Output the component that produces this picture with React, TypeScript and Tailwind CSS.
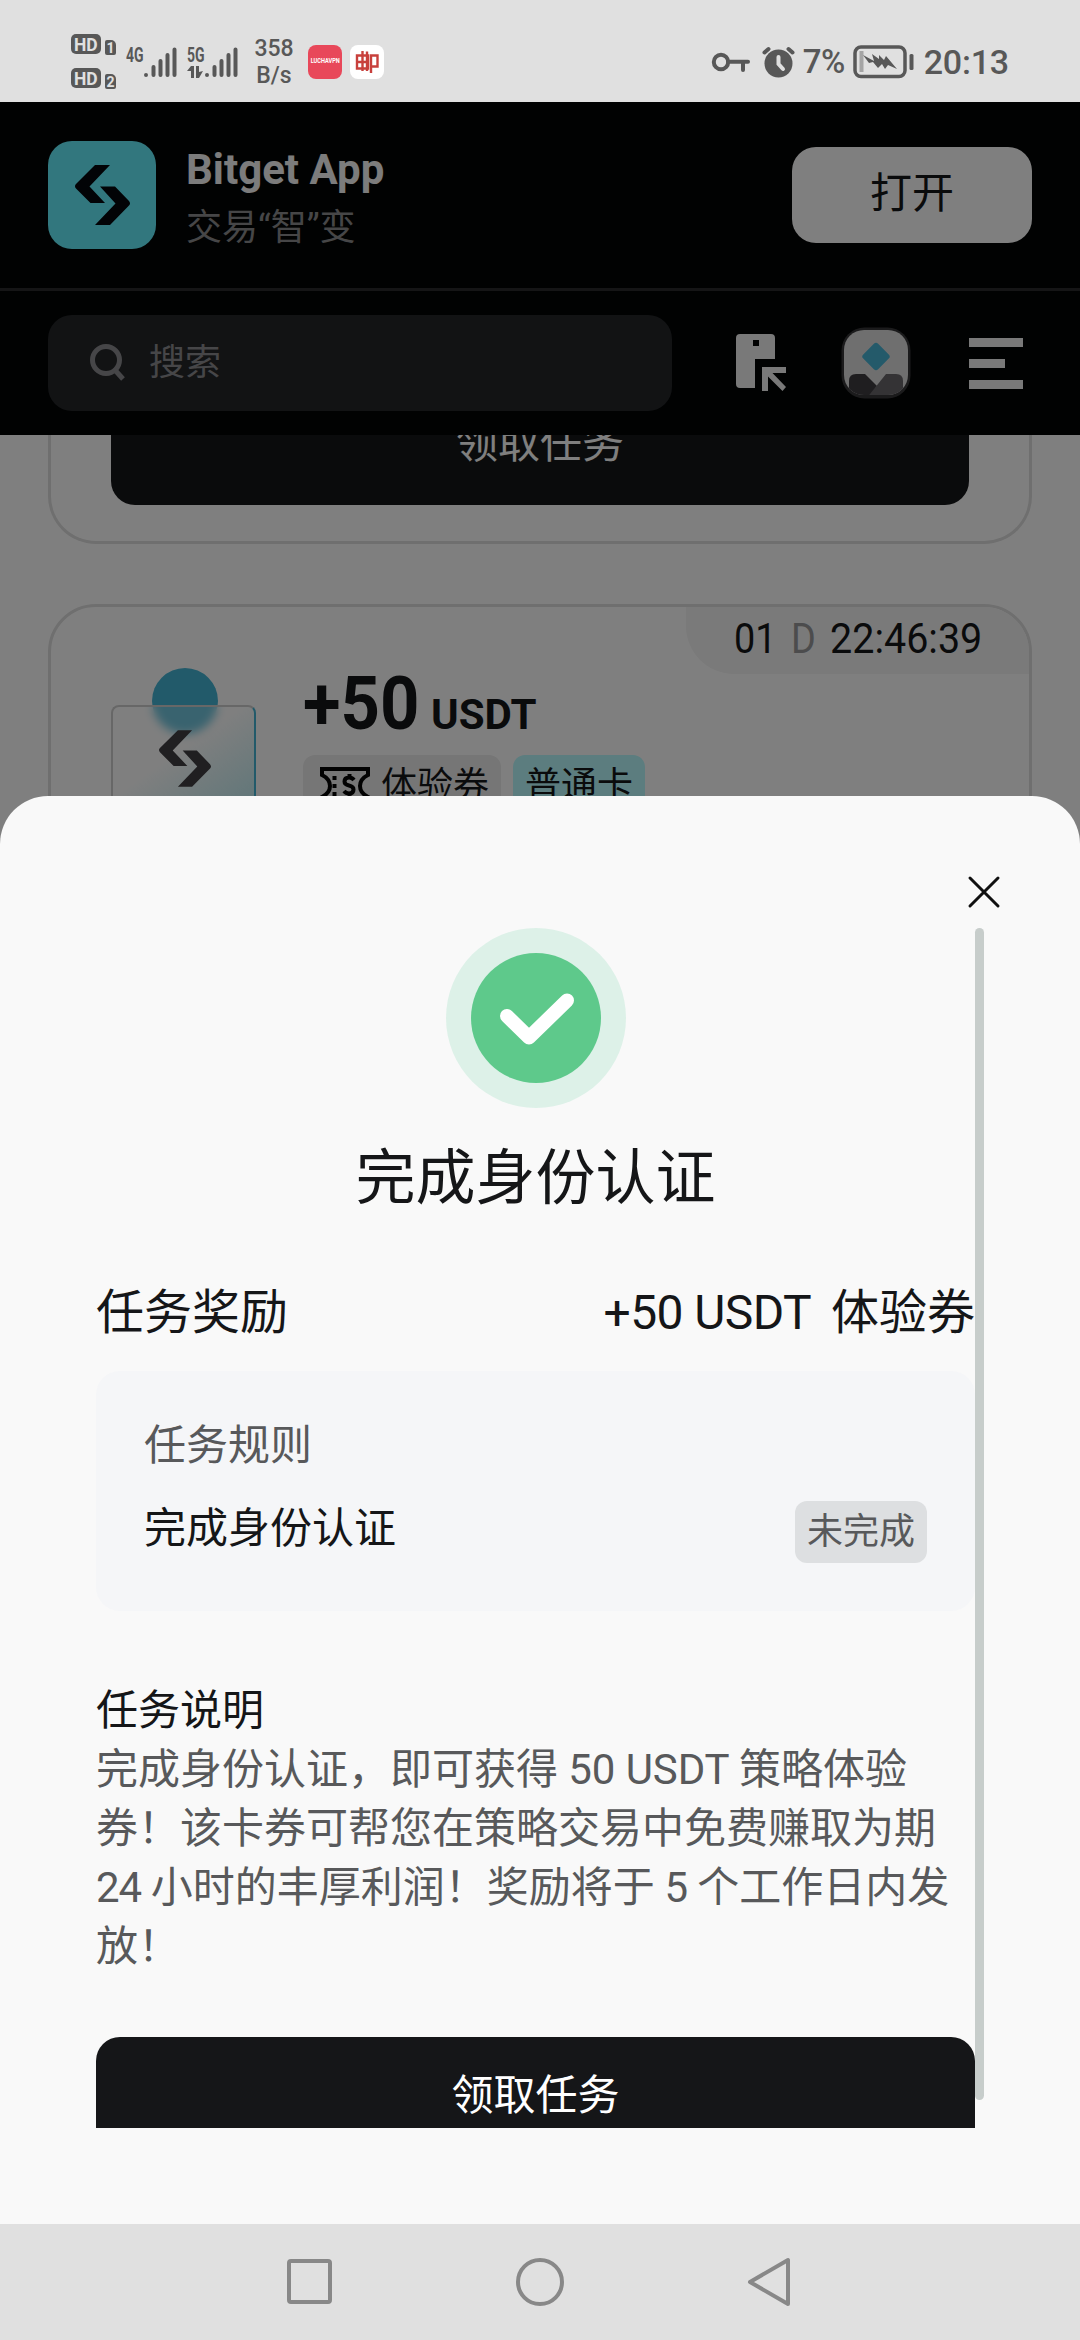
import React from 'react';

const SANS = "font-[Roboto,'Noto_Sans_CJK_SC',sans-serif]";

function HdBadge({ n }: { n: string }) {
  return (
    <div className="flex h-[21px] items-end gap-[4px]">
      <div className="flex h-[20px] w-[30px] items-center justify-center self-start rounded-[5px] bg-[#585858] text-[19px] font-bold leading-none text-[#e0e0e0]">
        <span className="scale-x-[0.92]">HD</span>
      </div>
      <div className="flex h-[15px] w-[11px] items-center justify-center rounded-[2px] rounded-tr-[5px] bg-[#585858] text-[14px] font-bold leading-none text-[#e0e0e0]">
        {n}
      </div>
    </div>
  );
}

function Signal({ label, arrows }: { label: string; arrows?: boolean }) {
  return (
    <div className="flex h-[34px] w-[51px] items-start">
      <div className="flex w-[17px] flex-col">
        <span className="block h-[21px] w-[26px] origin-left scale-x-[0.7] text-[20px] font-bold leading-[21px]">
          {label}
        </span>
        {arrows && (
          <svg width="16" height="12" viewBox="0 0 16 12" fill="#585858">
            <path d="M4 0h3v12H4V5H0z" />
            <path d="M9 0h3v6l4-1-4 7H9z" />
          </svg>
        )}
      </div>
      <svg width="34" height="34" viewBox="0 0 34 34" stroke="#585858" strokeWidth="4" strokeLinecap="round">
        <path d="M3 30v.1M10.500 30V22M17.500 30V16M24.500 30V10M31.500 30V4.500" />
      </svg>
    </div>
  );
}

function StatusBar() {
  return (
    <header className="flex h-[102px] shrink-0 items-center bg-[#e0e0e0] pl-[71px] pr-[71px] pt-[21px] text-[#585858]">
      <div className="flex flex-col gap-[13px]">
        <HdBadge n="1" />
        <HdBadge n="2" />
      </div>
      <div className="ml-[10px]">
        <Signal label="4G" />
      </div>
      <div className="ml-[10px]">
        <Signal label="5G" arrows />
      </div>
      <div className="ml-[15px] w-[42px] text-center text-[23px] font-medium leading-[27px]">
        358
        <br />
        B/s
      </div>
      <div className="ml-[13px] flex size-[34px] items-center justify-center overflow-hidden rounded-[8px] bg-[#e8485a] text-white">
        <span className="scale-x-[0.8] text-[7px] font-bold leading-none">LUCHAVPN</span>
      </div>
      <div className="ml-[8px] flex size-[34px] items-center justify-center rounded-[8px] bg-white">
        <svg width="24" height="24" viewBox="0 0 24 24" fill="none" stroke="#c8403c" strokeWidth="2.400">
          <path d="M2 5.500h11v13H2zM7.500 1v20M2 12h11M16 23V5.500h6.500v11H17M12 1.500V21" />
        </svg>
      </div>
      <div className="ml-auto flex items-center">
        <svg width="40" height="20" viewBox="0 0 40 20" fill="none" stroke="#585858" strokeWidth="4">
          <circle cx="10" cy="10" r="7.200" />
          <path d="M17 9.800h20M32 10v8" strokeLinecap="round" />
        </svg>
        <svg className="ml-[11px]" width="33" height="32" viewBox="0 0 33 32">
          <circle cx="16.500" cy="17.500" r="14" fill="#585858" />
          <path d="M2.500 6.500l4-3.500M30.500 6.500l-4-3.500" stroke="#585858" strokeWidth="4" strokeLinecap="round" />
          <path d="M16.500 11v7l4.500 5" fill="none" stroke="#e0e0e0" strokeWidth="4" strokeLinecap="round" />
        </svg>
        <span className="ml-[8px] text-[33px] font-medium leading-[34px] tracking-[-0.5px]">7%</span>
        <svg className="ml-[8px]" width="61" height="34" viewBox="0 0 61 34">
          <rect x="2" y="2" width="50" height="29.500" rx="6" fill="none" stroke="#585858" strokeWidth="3.500" />
          <rect x="6.500" y="6" width="4" height="21" fill="#a4a4a4" />
          <path d="M10 10l11 6-2-7 7 5 0-4 5 5 2-4 11 13-9-4-3 4-3-5-4 4-5-6-4 1z" fill="#585858" />
          <rect x="56.500" y="9" width="4" height="16" rx="1.500" fill="#585858" />
        </svg>
        <span className="ml-[10px] text-[34px] font-medium leading-[34px] tracking-[-0.2px]">20:13</span>
      </div>
    </header>
  );
}

function BitgetMark({ className, fill }: { className: string; fill: string }) {
  return (
    <svg className={className} viewBox="0 0 55 60" fill={fill}>
      <path d="M20 0h15L14.500 21.500 30 38H15.500L1 23.500q-2-2.500 0-4.500z" />
      <path d="M25 21.500h15L54 36q2 2.500 0 4.500L35 60H20l20.500-21.500z" />
    </svg>
  );
}

function AppBanner() {
  return (
    <div className="flex h-[186px] items-center bg-[#020404] px-[48px]">
      <div className="flex size-[108px] items-center justify-center rounded-[24px] bg-[#65eefc]">
        <BitgetMark className="h-[60px] w-[55px]" fill="#04060c" />
      </div>
      <div className="ml-[30px] flex flex-col pt-[8px]">
        <span className="text-[42px] font-bold leading-[54px] text-[#f8f8f8]">Bitget App</span>
        <span className="mt-[4px] text-[36px] leading-[54px] text-[#8c8c8e]">交易“智”变</span>
      </div>
      <button className="ml-auto h-[96px] w-[240px] rounded-[24px] bg-white pb-[3px] text-[42px] leading-none text-[#151618]">
        打开
      </button>
    </div>
  );
}

function SearchBar() {
  return (
    <div className="flex h-[147px] items-center border-t-[3px] border-[#2a2b2c] bg-[#020404] pl-[48px] pr-[57px]">
      <div className="flex h-[96px] w-[624px] items-center rounded-[24px] bg-[#242629] pl-[42px]">
        <svg width="36" height="38" viewBox="0 0 36 38" fill="none" stroke="#8c8c90" strokeWidth="5">
          <circle cx="16" cy="16" r="13.500" />
          <path d="M24.500 25.500L33 35" />
        </svg>
        <span className="ml-[23px] text-[36px] leading-none text-[#8c8c90]">搜索</span>
      </div>
      <svg className="ml-[64px]" width="52" height="60" viewBox="0 0 52 60" fill="#f2f2f2">
        <path
          fillRule="evenodd"
          d="M4 1h31a4 4 0 0 1 4 4v21H19v29H4a4 4 0 0 1-4-4V5a4 4 0 0 1 4-4zm13 6v6h6V7z"
        />
        <path d="M26 34h24v6H36.500L50 54l-3.500 4L32 43.500V58h-6z" />
      </svg>
      <svg className="ml-[53px]" width="70" height="72" viewBox="0 0 70 72">
        <defs>
          <clipPath id="avatar">
            <rect x="3" y="3" width="64" height="65" rx="20" />
          </clipPath>
        </defs>
        <rect x=".5" y=".5" width="69" height="71" rx="23" fill="#363638" />
        <g clipPath="url(#avatar)">
          <rect width="70" height="72" fill="#dedede" />
          <path d="M8 54q0-7 7-7h9l12 12-9 13H12q-4-4-4-8z" fill="#3e3c40" />
          <path d="M25 72l20-25h10q7 0 7 7v10q0 6-6 8z" fill="#68666a" />
          <rect x="24.500" y="19" width="21" height="21" rx="3" fill="#48b4d4" transform="rotate(45 35 29.500)" />
        </g>
      </svg>
      <div className="ml-auto flex w-[54px] flex-col gap-[12px]">
        <div className="h-[9px] bg-[#f2f2f2]" />
        <div className="h-[9px] w-[36px] bg-[#f2f2f2]" />
        <div className="h-[9px] bg-[#f2f2f2]" />
      </div>
    </div>
  );
}

function CouponIcon() {
  return (
    <svg width="50" height="38" viewBox="0 0 50 38" fill="none" stroke="#040404" strokeWidth="4">
      <path d="M2 2h46v6q-8 4-8 11t8 11v6H2v-6q8-4 8-11T2 8z" />
      <path d="M14.500 9v4M14.500 17v4M14.500 25v4" />
      <path d="M34 13q-2-2.500-5-2.500-4.500 0-4.500 4 0 3 4.500 4t4.500 4q0 4-4.500 4-3 0-5-2.500M29.500 7v4M29.500 26v4" />
    </svg>
  );
}

function TaskList() {
  return (
    <div className="flex flex-1 flex-col gap-[60px] overflow-hidden bg-white px-[48px]">
      <section className="h-[109px] shrink-0 rounded-b-[48px] border-[3px] border-t-0 border-[#dedede] px-[60px]">
        <div className="flex h-[70px] items-end justify-center overflow-hidden rounded-b-[24px] bg-[#151618]">
          <span className="h-[120px] pt-[29px] text-[42px] leading-[60px] text-white">领取任务</span>
        </div>
      </section>
      <section className="relative h-[600px] shrink-0 rounded-[48px] border-[3px] border-[#dedede]">
        <div className="absolute right-0 top-0 flex h-[67px] w-[343px] items-center rounded-bl-[48px] rounded-tr-[45px] bg-[#f4f4f4] pb-[4px] pl-[48px] text-[42px] leading-none text-[#151618]">
          <span className="w-[57px] origin-left scale-x-[0.9]">01</span>
          <span className="w-[39px] origin-left scale-x-[0.9] text-[#98989a]">D</span>
          <span className="origin-left scale-x-[0.94]">22:46:39</span>
        </div>
        <div className="flex pl-[60px] pt-[61px]">
          <div className="relative h-[200px] w-[145px]">
            <div className="absolute left-[41px] top-0 size-[66px] rounded-full bg-[#44b4d4]" />
            <div className="absolute left-0 top-[37px] h-[160px] w-[145px] rounded-[8px] border-[2px] border-[#cfcfcf] border-r-[#44b4d4] bg-linear-[145deg,#ffffff40_35%,#a0e4ec] backdrop-blur-[5px]" />
            <BitgetMark className="absolute left-[48px] top-[62px] h-[57px] w-[52px]" fill="#403e42" />
          </div>
          <div className="ml-[47px] flex flex-col">
            <div className="-mt-[3px] flex items-baseline font-bold leading-[78px] text-[#151618]">
              <span className="w-[128px] origin-left scale-x-[0.93] text-[74px]">+50</span>
              <span className="text-[42px]">USDT</span>
            </div>
            <div className="mt-[1px] flex gap-[12px] text-[36px] leading-[62px] text-[#151618]">
              <div className="flex h-[62px] w-[198px] items-start gap-[11px] rounded-[12px] bg-[#ececec] pl-[17px]">
                <div className="h-[50px] pt-[12px] leading-none">
                  <CouponIcon />
                </div>
                体验券
              </div>
              <div className="h-[62px] w-[132px] rounded-[12px] bg-[#b8fbfe] text-center">普通卡</div>
            </div>
          </div>
        </div>
      </section>
    </div>
  );
}

function TaskSheet() {
  return (
    <div className="absolute inset-0 flex flex-col justify-end bg-black/50">
      <div className="flex h-[1428px] flex-col rounded-t-[48px] bg-[#f9f9f9] px-[96px]">
        <div className="flex h-[132px] items-start justify-end">
          <svg className="-mr-[17px] mt-[79px]" width="34" height="34" viewBox="0 0 34 34" stroke="#101010" strokeWidth="3" strokeLinecap="round">
            <path d="M3 3l28 28M31 3L3 31" />
          </svg>
        </div>
        <div className="flex">
          <div className="flex h-[1200px] w-[879px] shrink-0 flex-col overflow-hidden">
            <svg className="shrink-0 self-center" width="180" height="180" viewBox="0 0 180 180">
              <circle cx="90" cy="90" r="90" fill="#ddf1e8" />
              <circle cx="90" cy="90" r="65" fill="#5ec98b" />
              <path d="M61 88l22 21.500 38-37" fill="none" stroke="#fff" strokeWidth="14" strokeLinecap="round" strokeLinejoin="round" />
            </svg>
            <h1 className="mt-[26px] text-center text-[60px] leading-[90px] text-[#151618]">完成身份认证</h1>
            <div className="mt-[53px] flex items-center justify-between text-[48px] leading-[72px] text-[#151618]">
              <span>任务奖励</span>
              <span className="flex gap-[20px]">
                <span className="tracking-[-0.6px]">+50 USDT</span>
                <span>体验券</span>
              </span>
            </div>
            <div className="mt-[22px] flex h-[240px] shrink-0 flex-col rounded-[24px] bg-[#f5f6f8] px-[48px] pt-[43px] text-[42px] leading-[63px]">
              <span className="text-[#58595b]">任务规则</span>
              <div className="mt-[20px] flex items-start justify-between">
                <span className="text-[#151618]">完成身份认证</span>
                <span className="mt-[4px] h-[62px] w-[132px] rounded-[12px] bg-[#dddfe1] text-center text-[36px] leading-[62px] text-[#58595b]">
                  未完成
                </span>
              </div>
            </div>
            <div className="mt-[70px] text-[42px] leading-[59px]">
              <h2 className="text-[#151618]">任务说明</h2>
              <p className="whitespace-nowrap text-[#58595b]">
                完成身份认证，即可获得<span className="tracking-[-0.1px]"> 50 USDT </span>策略体验
                <br />
                券！该卡券可帮您在策略交易中免费赚取为期
                <br />
                <span className="tracking-[-1px]">24 </span>小时的丰厚利润！奖励将于
                <span className="tracking-[-0.6px]"> 5 </span>个工作日内发
                <br />
                放！
              </p>
            </div>
            <button className="mt-[61px] h-[120px] shrink-0 rounded-[24px] bg-[#151618] pb-[3px] text-[42px] leading-[60px] text-white">
              领取任务
            </button>
          </div>
          <div className="h-[1172px] w-[9px] shrink-0 rounded-full bg-[#c7cdcb]" />
        </div>
      </div>
    </div>
  );
}

function NavBar() {
  return (
    <nav className="flex h-[116px] shrink-0 items-center justify-center gap-[180px] bg-[#e0e0e0]">
      <svg width="50" height="50" viewBox="0 0 50 50" fill="none" stroke="#888" strokeWidth="4">
        <rect x="4" y="4" width="41" height="41" rx="2" />
      </svg>
      <svg width="50" height="50" viewBox="0 0 50 50" fill="none" stroke="#888" strokeWidth="4">
        <circle cx="25" cy="25" r="22" />
      </svg>
      <svg width="50" height="50" viewBox="0 0 50 50" fill="none" stroke="#888" strokeWidth="4" strokeLinejoin="round">
        <path d="M43 3v44L5 25z" />
      </svg>
    </nav>
  );
}

export default function App() {
  return (
    <div className={`flex h-[2340px] w-[1080px] flex-col overflow-hidden bg-white ${SANS}`}>
      <StatusBar />
      <main className="relative flex h-[2122px] shrink-0 flex-col overflow-hidden">
        <AppBanner />
        <SearchBar />
        <TaskList />
        <TaskSheet />
      </main>
      <NavBar />
    </div>
  );
}
